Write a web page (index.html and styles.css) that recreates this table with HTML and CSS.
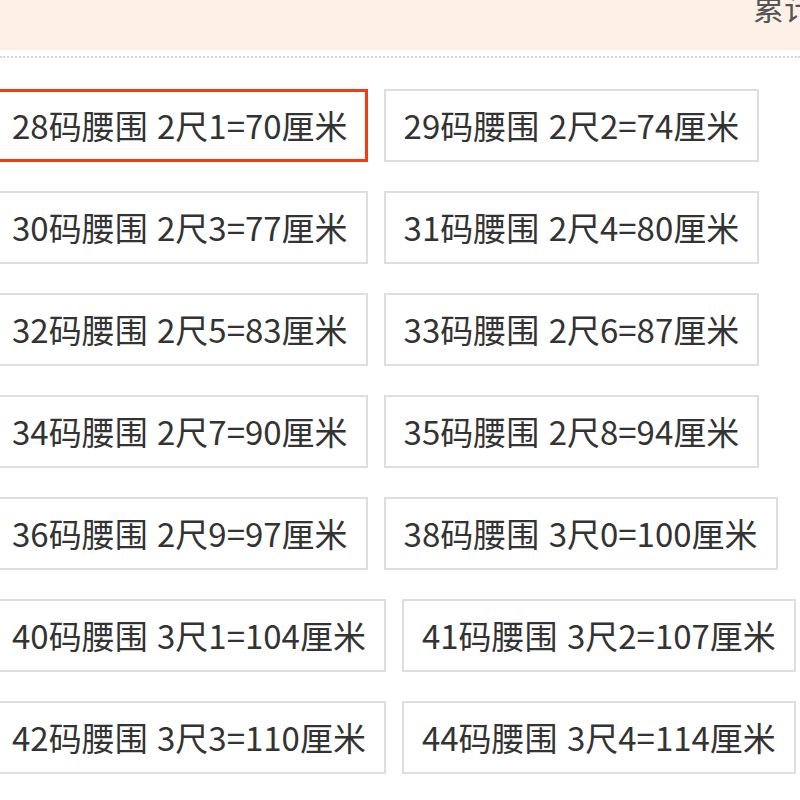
FILE: index.html
```html
<!DOCTYPE html>
<html lang="zh-CN">
<head>
    <meta charset="UTF-8">
    <meta name="viewport" content="width=device-width, initial-scale=1">
    <title>尺码选择</title>
    <link rel="stylesheet" href="styles.css">
</head>
<body>
<!-- Tab bar above the sizes -->
<div class="tab-bar">
    <span class="tab-link">累计评价</span>
</div>
<div class="divider"></div>

<!-- Size list -->
<ul class="size-list">
    <li><a class="size-item selected" href="#">28码腰围 2尺1=70厘米</a></li>
    <li><a class="size-item" href="#">29码腰围 2尺2=74厘米</a></li>
    <li><a class="size-item" href="#">30码腰围 2尺3=77厘米</a></li>
    <li><a class="size-item" href="#">31码腰围 2尺4=80厘米</a></li>
    <li><a class="size-item" href="#">32码腰围 2尺5=83厘米</a></li>
    <li><a class="size-item" href="#">33码腰围 2尺6=87厘米</a></li>
    <li><a class="size-item" href="#">34码腰围 2尺7=90厘米</a></li>
    <li><a class="size-item" href="#">35码腰围 2尺8=94厘米</a></li>
    <li><a class="size-item" href="#">36码腰围 2尺9=97厘米</a></li>
    <li><a class="size-item" href="#">38码腰围 3尺0=100厘米</a></li>
    <li><a class="size-item" href="#">40码腰围 3尺1=104厘米</a></li>
    <li><a class="size-item" href="#">41码腰围 3尺2=107厘米</a></li>
    <li><a class="size-item" href="#">42码腰围 3尺3=110厘米</a></li>
    <li><a class="size-item" href="#">44码腰围 3尺4=114厘米</a></li>
</ul>
</body>
</html>
```

FILE: styles.css
```css
* { box-sizing: border-box; }
body {
  margin: 0;
  background: #fff;
  color: #333;
  font-family: "Noto Sans CJK SC", "Liberation Sans", sans-serif;
  overflow: hidden;
}
/* Tab bar on top */
.tab-bar {
  height: 50px;
  background: #fdf0e6;
  display: flex;
  justify-content: flex-start;
  padding-left: 753px;
  white-space: nowrap;
  overflow: hidden;
}
.tab-link {
  font-size: 31px;
  line-height: 31px;
  margin-top: -9px;
  color: #555;
}
.divider {
  margin-top: 6px;
  border-top: 2px dotted #d6d6d6;
}
/* Size buttons */
.size-list {
  list-style: none;
  margin: 31px 0 0 -8px;
  padding: 0;
  width: 810px;
  display: flex;
  flex-wrap: wrap;
  gap: 29px 16px;
}
.size-item {
  display: block;
  height: 73px;
  padding: 0 18px;
  border: 2px solid #dedede;
  font-size: 33px;
  line-height: 69px;
  word-spacing: 2px;
  color: #333;
  text-decoration: none;
  white-space: nowrap;
}
.size-item.selected {
  border: 3px solid #f03e10;
  padding: 0 17px;
  line-height: 67px;
}
```
